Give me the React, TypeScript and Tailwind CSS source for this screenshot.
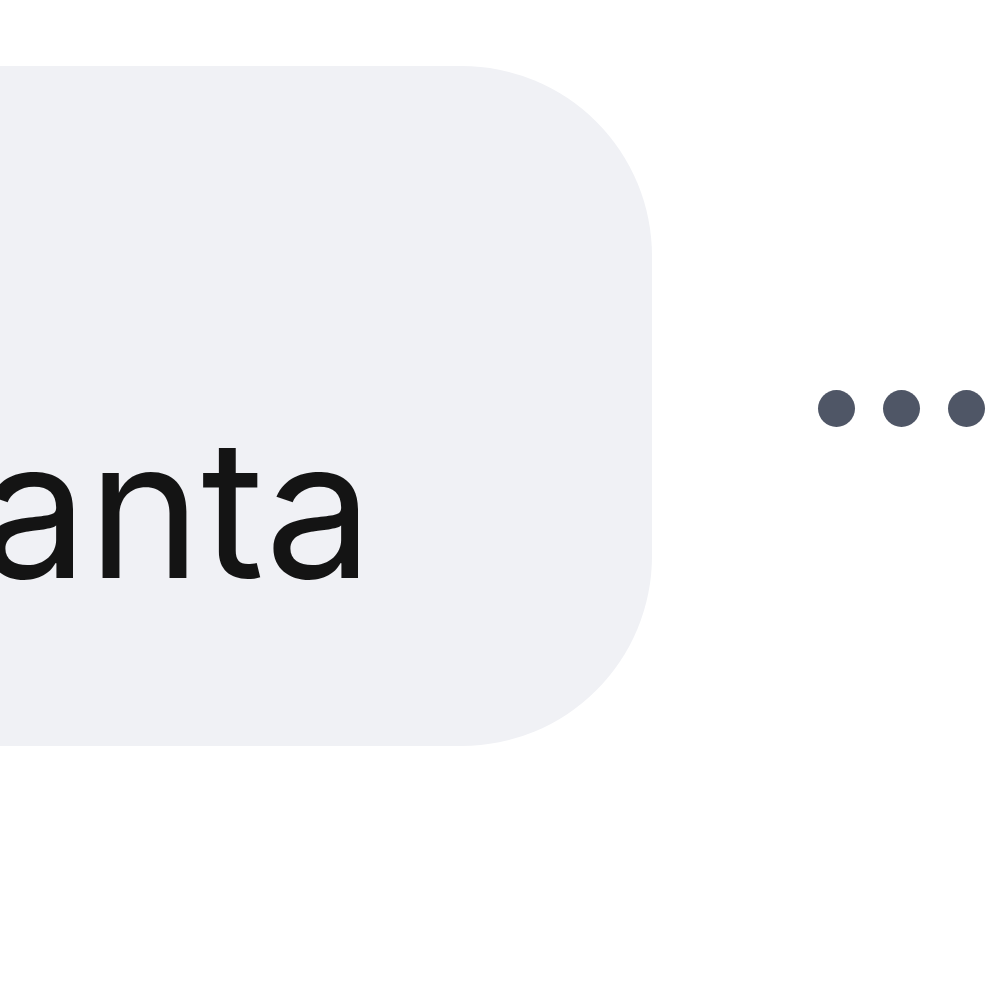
import React from "react";

export default function App() {
  return (
    <div className="w-[1000px] h-[999px] overflow-hidden bg-white">
      <div className="flex items-center pt-[66px]">
        <div className="shrink-0 w-[852px] ml-[-200px] pl-[180px] pt-[346px] pb-[142px] rounded-[190px] bg-[#f0f1f5]">
          <span
            className="block whitespace-nowrap text-[192px] leading-none text-[#141414]"
            style={{ fontFamily: 'Inter, "Liberation Sans", sans-serif' }}
          >
            anta
          </span>
        </div>
        <div className="ml-[166px] flex items-center gap-[28px] shrink-0 mt-[4px]">
          <div className="w-[37px] h-[37px] rounded-full bg-[#4f5666]" />
          <div className="w-[37px] h-[37px] rounded-full bg-[#4f5666]" />
          <div className="w-[37px] h-[37px] rounded-full bg-[#4f5666]" />
        </div>
      </div>
    </div>
  );
}
